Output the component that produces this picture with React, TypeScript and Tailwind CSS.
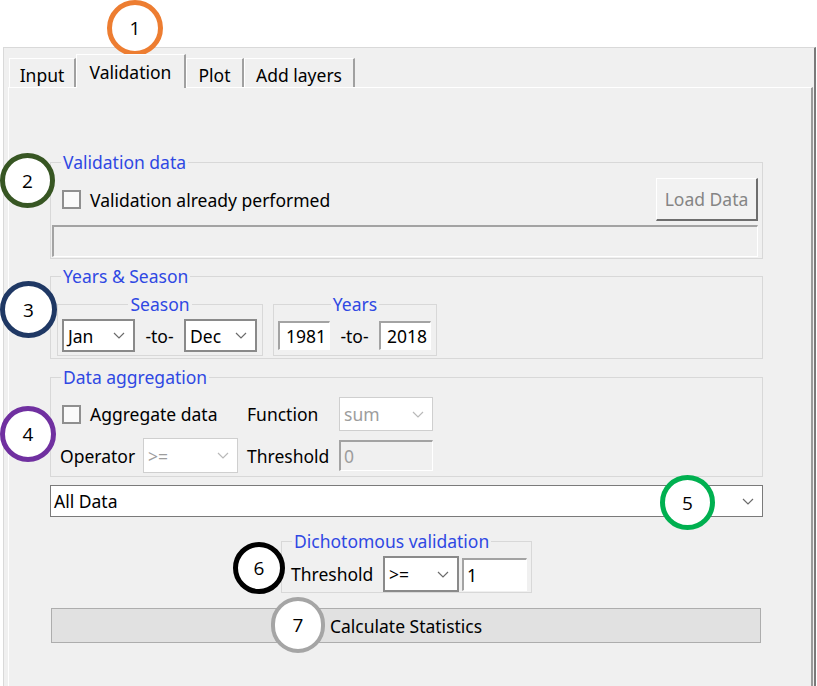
import React from "react";

function Chevron({ light }: { light?: boolean }) {
  return (
    <svg width="12" height="7" viewBox="0 0 12 7" className="shrink-0">
      <polyline points="1,1 6,6 11,1" fill="none" stroke={light ? "#b9b9b9" : "#6b6b6b"} strokeWidth="1.2" />
    </svg>
  );
}

function Combo({ value, disabled, className }: { value: string; disabled?: boolean; className: string }) {
  return (
    <div
      className={`flex items-center justify-between bg-white pl-[4px] pr-[8px] ${
        disabled ? "border border-[#cfcfcf] text-[#9d9d9d]" : "border-2 border-[#8a8a8a] text-black"
      } ${className}`}
    >
      <span>{value}</span>
      <Chevron light={disabled} />
    </div>
  );
}

function Edit({ value, right, disabled, className }: { value: string; right?: boolean; disabled?: boolean; className: string }) {
  return (
    <div
      className={`flex items-center border-t-2 border-l-2 border-b border-r border-t-[#a3a3a3] border-l-[#a3a3a3] border-b-white border-r-white px-[3px] ${
        right ? "justify-end" : "justify-start"
      } ${disabled ? "bg-[#f0f0f0] text-[#9d9d9d]" : "bg-white text-black"} ${className}`}
    >
      {value}
    </div>
  );
}

function CheckBox() {
  return <div className="h-[19px] w-[19px] shrink-0 border-2 border-[#8f8f8f] bg-[#fafafa]" />;
}

function Group({ title, center, className, children }: { title: string; center?: boolean; className?: string; children: React.ReactNode }) {
  return (
    <fieldset className={`border border-[#d8d8d8] ${className ?? ""}`}>
      <legend className={`px-[2px] leading-[22px] text-[#2f48e3] ${center ? "mx-auto" : "ml-[10px]"}`}>{title}</legend>
      {children}
    </fieldset>
  );
}

function Marker({ n, color, className }: { n: number; color: string; className: string }) {
  return (
    <div
      className={`absolute flex items-center justify-center rounded-full bg-white font-['Open_Sans',sans-serif] text-[19px] text-black ${color} ${className}`}
    >
      {n}
    </div>
  );
}

const tabs = [
  { label: "Input", w: "w-[67px]" },
  { label: "Validation", w: "w-[110px]", active: true },
  { label: "Plot", w: "w-[58px]" },
  { label: "Add layers", w: "w-[111px]" },
];

export default function App() {
  return (
    <div className="relative h-[686px] w-[817px] overflow-hidden bg-white font-['Noto_Sans',sans-serif] text-[17.5px] leading-[24px] text-black">
      <div className="h-[47px]" />
      <div className="ml-[3px] flex h-[639px] w-[813px] flex-col border-l border-t border-[#d9d9d9] border-r-2 border-r-[#7a7a7a] bg-[#f0f0f0]">
        {/* tab headers */}
        <div className="relative z-10 flex h-[39px] items-end pl-[5px]">
          {tabs.map((t) =>
            t.active ? (
              <div
                key={t.label}
                className={`${t.w} -mb-[1px] flex h-[34px] items-start justify-center border-l border-t border-white border-r-2 border-r-[#a0a0a0] bg-[#f0f0f0] pt-[5px]`}
              >
                {t.label}
              </div>
            ) : (
              <div
                key={t.label}
                className={`${t.w} flex h-[29px] items-center justify-center border-l border-t border-white border-r-2 border-r-[#a0a0a0] pt-[4px]`}
              >
                {t.label}
              </div>
            )
          )}
        </div>

        {/* tab page */}
        <div className="ml-[4px] mr-[1px] flex flex-1 flex-col border-l border-t border-white border-r-2 border-r-[#9a9a9a] pl-[41px] pr-[48px]">
          <Group title="Validation data" className="mt-[63px]">
            <div className="pb-[1px] pr-[4px] pt-[5px]">
              <div className="flex items-center justify-between pl-[11px]">
                <div className="flex items-center gap-[9px]">
                  <CheckBox />
                  <span>Validation already performed</span>
                </div>
                <div className="flex h-[43px] w-[102px] items-center justify-center border-l border-t border-white border-b-2 border-r-2 border-b-[#6e6e6e] border-r-[#6e6e6e] bg-[#f2f2f2] text-[#858585]">
                  Load Data
                </div>
              </div>
              <div className="ml-[1px] mt-[4px] h-[32px] border-l-2 border-t-2 border-b border-r border-l-[#a3a3a3] border-t-[#a3a3a3] border-b-white border-r-white bg-[#f0f0f0]" />
            </div>
          </Group>

          <Group title="Years & Season" className="mt-[6px]">
            <div className="flex items-start pb-[2px] pl-[6px] pt-[6px]">
              <Group title="Season" center className="w-[206px]">
                <div className="flex items-center pb-[3px] pl-[4px] pt-[4px]">
                  <Combo value="Jan" className="h-[33px] w-[73px]" />
                  <span className="w-[49px] text-center">-to-</span>
                  <Combo value="Dec" className="h-[33px] w-[73px]" />
                </div>
              </Group>
              <Group title="Years" center className="ml-[10px] w-[164px]">
                <div className="flex h-[40px] items-center pb-[3px] pl-[4px] pt-[4px]">
                  <Edit value="1981" right className="h-[29px] w-[52px]" />
                  <span className="w-[49px] text-center">-to-</span>
                  <Edit value="2018" right className="h-[29px] w-[52px]" />
                </div>
              </Group>
            </div>
          </Group>

          <Group title="Data aggregation" className="mt-[7px]">
            <div className="flex flex-col gap-[7px] pb-[3px] pt-[9px]">
              <div className="flex items-center pl-[11px]">
                <div className="flex w-[185px] items-center gap-[9px]">
                  <CheckBox />
                  <span>Aggregate data</span>
                </div>
                <span className="w-[92px]">Function</span>
                <Combo value="sum" disabled className="h-[34px] w-[94px]" />
              </div>
              <div className="flex items-center pl-[9px]">
                <span className="w-[83px]">Operator</span>
                <Combo value=">=" disabled className="h-[35px] w-[95px]" />
                <span className="ml-[9px] w-[92px]">Threshold</span>
                <Edit value="0" disabled className="h-[31px] w-[94px]" />
              </div>
            </div>
          </Group>

          <div className="mt-[8px] flex h-[32px] items-center justify-between border border-[#7a7a7a] bg-white pl-[3px] pr-[8px]">
            <span>All Data</span>
            <Chevron />
          </div>

          <Group title="Dichotomous validation" className="mx-auto mt-[13px] w-[251px]">
            <div className="flex items-center pl-[9px] pt-[4px]">
              <span className="w-[92px]">Threshold</span>
              <Combo value=">=" className="h-[36px] w-[76px]" />
              <Edit value="1" className="ml-[3px] h-[33px] w-[65px]" />
            </div>
          </Group>

          <div className="ml-[1px] mr-[2px] mt-[15px] flex h-[35px] items-center justify-center border border-[#adadad] bg-[#e1e1e1]">
            Calculate Statistics
          </div>
        </div>
      </div>

      {/* numbered annotation markers */}
      <Marker n={1} color="border-[5px] border-[#ed7d31]" className="left-[107px] top-[0px] h-[56px] w-[56px]" />
      <Marker n={2} color="border-[5px] border-[#375623]" className="left-[0px] top-[153px] h-[55px] w-[55px]" />
      <Marker n={3} color="border-[5px] border-[#1f3864]" className="left-[0px] top-[281px] h-[57px] w-[57px]" />
      <Marker n={4} color="border-[5px] border-[#7030a0]" className="left-[0px] top-[406px] h-[56px] w-[56px]" />
      <Marker n={5} color="border-[5px] border-[#00b050]" className="left-[660px] top-[475px] h-[55px] w-[55px]" />
      <Marker n={6} color="border-[5px] border-black" className="left-[233px] top-[542px] h-[52px] w-[52px]" />
      <Marker n={7} color="border-[4px] border-[#a5a5a5] bg-transparent" className="left-[271px] top-[597px] h-[56px] w-[54px]" />
    </div>
  );
}
